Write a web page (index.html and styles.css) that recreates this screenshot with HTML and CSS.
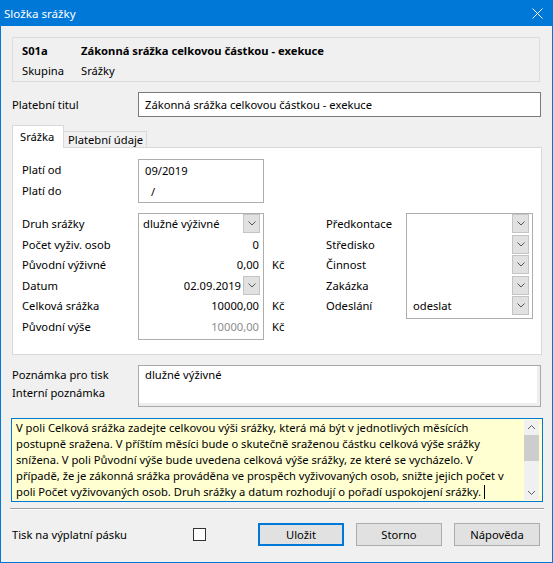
FILE: index.html
```html
<!DOCTYPE html>
<html lang="cs">

<head>
    <meta charset="UTF-8">
    <meta name="viewport" content="width=device-width, initial-scale=1.0">
    <title>Složka srážky</title>
    <link rel="stylesheet" href="styles.css">
</head>

<body>
    <div class="window">
        <div class="titlebar">
            <span>Složka srážky</span>
            <svg class="close" width="11" height="11" viewBox="0 0 11 11"><path d="M0.5 0.5 L10.5 10.5 M10.5 0.5 L0.5 10.5" stroke="#fff" stroke-width="1" fill="none"/></svg>
        </div>
        <div class="content">
            <!-- hlavicka slozky -->
            <div class="head_box">
                <div class="head_row"><b class="head_key">S01a</b><b>Zákonná srážka celkovou částkou - exekuce</b></div>
                <div class="head_row"><span class="head_key">Skupina</span><span>Srážky</span></div>
            </div>

            <div class="title_row">
                <label>Platební titul</label>
                <div class="input title_input">Zákonná srážka celkovou částkou - exekuce</div>
            </div>

            <div class="tabs">
                <div class="tab active">Srážka</div>
                <div class="tab">Platební údaje</div>
            </div>
            <div class="panel">
                <div class="section">
                    <div class="col labels">
                        <div class="row">Platí od</div>
                        <div class="row">Platí do</div>
                    </div>
                    <div class="box date_box">
                        <div class="row val">09/2019</div>
                        <div class="row val slash">/</div>
                    </div>
                </div>

                <div class="section second">
                    <div class="col labels">
                        <div class="row">Druh srážky</div>
                        <div class="row">Počet vyživ. osob</div>
                        <div class="row">Původní výživné</div>
                        <div class="row">Datum</div>
                        <div class="row">Celková srážka</div>
                        <div class="row">Původní výše</div>
                    </div>
                    <div class="box left_box">
                        <div class="row combo"><span class="val">dlužné výživné</span><span class="drop"><svg width="8" height="5" viewBox="0 0 8 5"><path d="M0.5 0.5 L4 4 L7.5 0.5" stroke="#555" fill="none"/></svg></span></div>
                        <div class="row num">0</div>
                        <div class="row num">0,00</div>
                        <div class="row combo num_combo"><span class="val">02.09.2019</span><span class="drop"><svg width="8" height="5" viewBox="0 0 8 5"><path d="M0.5 0.5 L4 4 L7.5 0.5" stroke="#555" fill="none"/></svg></span></div>
                        <div class="row num">10000,00</div>
                        <div class="row num muted">10000,00</div>
                    </div>
                    <div class="col currency">
                        <div class="row"></div>
                        <div class="row"></div>
                        <div class="row">Kč</div>
                        <div class="row"></div>
                        <div class="row">Kč</div>
                        <div class="row">Kč</div>
                    </div>
                    <div class="col labels right_labels">
                        <div class="row">Předkontace</div>
                        <div class="row">Středisko</div>
                        <div class="row">Činnost</div>
                        <div class="row">Zakázka</div>
                        <div class="row">Odeslání</div>
                    </div>
                    <div class="box right_box">
                        <div class="row combo"><span class="val"></span><span class="drop"><svg width="8" height="5" viewBox="0 0 8 5"><path d="M0.5 0.5 L4 4 L7.5 0.5" stroke="#555" fill="none"/></svg></span></div>
                        <div class="row combo"><span class="val"></span><span class="drop"><svg width="8" height="5" viewBox="0 0 8 5"><path d="M0.5 0.5 L4 4 L7.5 0.5" stroke="#555" fill="none"/></svg></span></div>
                        <div class="row combo"><span class="val"></span><span class="drop"><svg width="8" height="5" viewBox="0 0 8 5"><path d="M0.5 0.5 L4 4 L7.5 0.5" stroke="#555" fill="none"/></svg></span></div>
                        <div class="row combo"><span class="val"></span><span class="drop"><svg width="8" height="5" viewBox="0 0 8 5"><path d="M0.5 0.5 L4 4 L7.5 0.5" stroke="#555" fill="none"/></svg></span></div>
                        <div class="row combo"><span class="val">odeslat</span><span class="drop"><svg width="8" height="5" viewBox="0 0 8 5"><path d="M0.5 0.5 L4 4 L7.5 0.5" stroke="#555" fill="none"/></svg></span></div>
                    </div>
                </div>
            </div>

            <div class="notes">
                <div class="notes_labels">
                    <div>Poznámka pro tisk</div>
                    <div>Interní poznámka</div>
                </div>
                <div class="notes_box">dlužné výživné</div>
            </div>

            <!-- napoveda ke slozce -->
            <div class="hint">
                <div class="hint_text">V poli Celková srážka zadejte celkovou výši srážky, která má být v jednotlivých měsících<br>postupně sražena. V příštím měsíci bude o skutečně sraženou částku celková výše srážky<br>snížena. V poli Původní výše bude uvedena celková výše srážky, ze které se vycházelo. V<br>případě, že je zákonná srážka prováděna ve prospěch vyživovaných osob, snižte jejich počet v<br>poli Počet vyživovaných osob. Druh srážky a datum rozhodují o pořadí uspokojení srážky.<span class="caret"></span></div>
                <div class="scrollbar">
                    <svg width="15" height="15" viewBox="0 0 15 15"><path d="M4 9 L7.5 5.5 L11 9" stroke="#606060" fill="none"/></svg>
                    <div class="thumb"></div>
                    <div class="track"></div>
                    <svg width="15" height="15" viewBox="0 0 15 15"><path d="M4 6 L7.5 9.5 L11 6" stroke="#606060" fill="none"/></svg>
                </div>
            </div>

            <div class="separator"></div>

            <div class="footer">
                <label class="print_label">Tisk na výplatní pásku</label>
                <span class="checkbox"></span>
                <div class="buttons">
                    <div class="btn default">Uložit</div>
                    <div class="btn">Storno</div>
                    <div class="btn">Nápověda</div>
                </div>
            </div>
        </div>
    </div>
</body>

</html>
```

FILE: styles.css
```css
* {
    margin: 0;
    padding: 0;
    box-sizing: border-box;
}

body {
    font-family: "Noto Sans", "Open Sans", sans-serif;
    font-size: 11.2px;
    color: #000;
    background-color: #fff;
}

.window {
    width: 553px;
    height: 563px;
    border: 1px solid #0078d7;
    border-top: 0;
    background-color: #f0f0f0;
}

.titlebar {
    display: flex;
    align-items: center;
    justify-content: space-between;
    height: 26px;
    padding: 0 10px 0 4px;
    margin: 0 -1px;
    background-color: #0078d7;
    color: #fff;
    font-size: 11.6px;
}

.content {
    padding: 11px 11px 0 11px;
}

.head_box {
    height: 45px;
    padding-top: 3px;
    padding-left: 9px;
    border: 1px solid #dcdcdc;
    margin-right: 1px;
}

.head_row {
    display: flex;
    height: 20px;
    line-height: 20px;
}

.head_key {
    width: 59px;
}

.title_row {
    display: flex;
    align-items: center;
    margin-top: 10px;
    height: 25px;
}

.title_row label {
    width: 126px;
}

.input {
    background-color: #fff;
    border: 1px solid #7a7a7a;
}

.title_input {
    width: 403px;
    height: 25px;
    line-height: 23px;
    padding-left: 6px;
}

.tabs {
    display: flex;
    align-items: flex-end;
    height: 22px;
    margin-top: 8px;
}

.tab {
    width: 84px;
    height: 16px;
    line-height: 15px;
    padding: 0 4px;
    border: 1px solid #d9d9d9;
    border-bottom: 0;
    margin-left: -1px;
    white-space: nowrap;
}

.tab.active {
    position: relative;
    z-index: 1;
    height: 23px;
    line-height: 22px;
    width: 52px;
    padding-left: 7px;
    margin-left: 0;
    margin-bottom: -1px;
    background-color: #fff;
}

.panel {
    width: 530px;
    height: 208px;
    padding: 11px 0 0 9px;
    border: 1px solid #d9d9d9;
    background-color: #fff;
}

.section {
    display: flex;
}

.section.second {
    margin-top: 10px;
}

.col {
    padding-top: 1px;
}

.row {
    height: 20.5px;
    line-height: 20.5px;
    white-space: nowrap;
}

.labels {
    width: 116px;
}

.box {
    border: 1px solid #adadad;
    background-color: #fff;
}

.date_box {
    width: 126px;
    height: 44px;
    padding-top: 1px;
}

.date_box .val {
    padding-left: 6px;
}

.date_box .slash {
    padding-left: 12px;
}

.left_box {
    width: 126px;
    height: 127px;
}

.num {
    text-align: right;
    padding-right: 4px;
}

.muted {
    color: #8d8d8d;
}

.combo {
    display: flex;
    justify-content: space-between;
    padding-left: 4px;
}

.num_combo {
    padding-left: 0;
}

.num_combo .val {
    flex: 1;
    text-align: right;
    padding-right: 2px;
}

.drop {
    display: flex;
    align-items: center;
    justify-content: center;
    width: 17px;
    height: 19px;
    margin: 0 3px 0 0;
    border: 1px solid #c4c4c4;
    background-color: #e1e1e1;
}

.currency {
    width: 62px;
    padding-left: 8px;
}

.right_labels {
    width: 80px;
}

.right_box {
    width: 127px;
    height: 106px;
}

.right_box .combo {
    padding-left: 6px;
}

.notes {
    display: flex;
    margin-top: 10px;
}

.notes_labels {
    width: 126px;
    padding-top: 1px;
}

.notes_labels div {
    height: 18px;
    line-height: 18px;
}

.notes_box {
    width: 403px;
    height: 42px;
    padding: 1px 6px;
    border: 1px solid #a9a9a9;
    background-color: #fff;
    box-shadow: inset -3px -3px 0 #eeeeee;
}

.hint {
    display: flex;
    justify-content: space-between;
    width: 532px;
    height: 84px;
    margin: 11px 0 0 -1px;
    padding: 1px 3px 1px 4px;
    border: 1px solid #0078d7;
    background-color: #ffffd2;
}

.hint_text {
    line-height: 16px;
    white-space: nowrap;
}

.caret {
    display: inline-block;
    width: 1px;
    height: 14px;
    margin-left: 3px;
    vertical-align: -3px;
    background-color: #000;
}

.scrollbar {
    display: flex;
    flex-direction: column;
    flex-shrink: 0;
    width: 15px;
    background-color: #f0f0f0;
}

.thumb {
    height: 26px;
    background-color: #cdcdcd;
}

.track {
    flex: 1;
}

.separator {
    height: 2px;
    margin: 6px 0 0 -2px;
    width: 534px;
    border-top: 1px solid #a0a0a0;
    border-bottom: 1px solid #fff;
}

.footer {
    display: flex;
    align-items: center;
    margin-top: 13px;
    height: 23px;
}

.print_label {
    width: 181px;
}

.checkbox {
    width: 13px;
    height: 13px;
    border: 1px solid #333;
    background-color: #fff;
}

.buttons {
    display: flex;
    gap: 12px;
    margin-left: auto;
    margin-right: 1px;
}

.btn {
    width: 86px;
    height: 23px;
    line-height: 21px;
    text-align: center;
    border: 1px solid #adadad;
    background-color: #e1e1e1;
}

.btn.default {
    border: 2px solid #0078d7;
    line-height: 19px;
}
```
